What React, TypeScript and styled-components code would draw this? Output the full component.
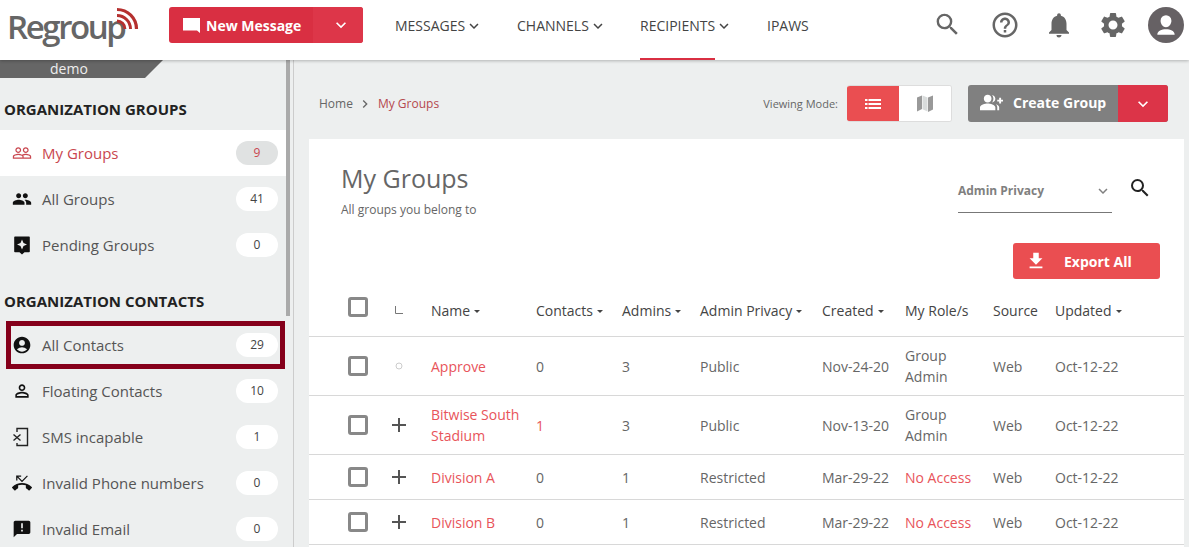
import styled, { createGlobalStyle } from "styled-components";
import {
	MdAccountCircle,
	MdAnnouncement,
	MdFileDownload,
	MdGroupAdd,
	MdHelpOutline,
	MdKeyboardArrowDown,
	MdNotifications,
	MdPeople,
	MdPeopleOutline,
	MdPersonOutline,
	MdPhoneMissed,
	MdSearch,
	MdSettings,
	MdChevronRight,
} from "react-icons/md";
import type { ReactNode } from "react";

const GlobalStyle = createGlobalStyle`
	html, body {
		margin: 0;
		height: 547px;
		overflow: hidden;
		background: #edefef;
		font-family: "Open Sans", "Liberation Sans", sans-serif;
		font-size: 14px;
		color: #444;
	}
	* {
		box-sizing: border-box;
	}
`;

const Page = styled.div`
	display: flex;
	flex-direction: column;
	height: 547px;
	overflow: hidden;
`;

const TopBar = styled.header`
	position: relative;
	z-index: 2;
	flex: 0 0 60px;
	display: flex;
	align-items: center;
	padding: 0 5px 0 7px;
	background: #fff;
	box-shadow: 0 1px 3px rgba(0, 0, 0, 0.25);
`;

const Logo = styled.div`
	position: relative;
	flex: 0 0 162px;
	height: 60px;
	font-size: 33px;
	font-weight: 600;
	line-height: 53px;
	letter-spacing: -2.4px;
	color: #666;
	svg {
		position: absolute;
		left: 98px;
		top: 4px;
	}
`;

const SplitButton = styled.div`
	display: flex;
	width: 194px;
	height: 36px;
	margin-bottom: 10px;
	border-radius: 3px;
	overflow: hidden;
	background: #d92f42;
	color: #fff;
`;

const SplitMain = styled.div`
	flex: 1;
	display: flex;
	align-items: center;
	gap: 6px;
	padding-left: 14px;
	font-size: 14px;
	font-weight: 700;
`;

const SplitCaret = styled.div`
	flex: 0 0 50px;
	display: flex;
	align-items: center;
	justify-content: center;
	background: #dd3649;
	font-size: 20px;
	padding-left: 5px;
`;

const Nav = styled.nav`
	display: flex;
	height: 60px;
	margin-left: 32px;
`;

const NavItem = styled.div<{ $active?: boolean; $width: number }>`
	display: flex;
	align-items: center;
	flex: 0 0 ${(p) => p.$width}px;
	min-width: 0;
	height: 60px;
	padding-bottom: 9px;
	font-size: 14px;
	color: #444;
	svg {
		flex: none;
		font-size: 18px;
	}
	${(p) => p.$active && `box-shadow: inset 0 -2px 0 #d92f42; margin-right: 52px;`}
`;

const TopIcons = styled.div`
	margin-left: auto;
	display: flex;
	align-items: center;
	gap: 24px;
	padding-bottom: 11px;
	color: #666;
	svg + svg {
		flex: none;
	}
`;

const HelpIcon = styled(MdHelpOutline)`
	margin-left: 4px;
`;

const Avatar = styled.div`
	position: relative;
	width: 36px;
	height: 36px;
	margin-left: -4px;
	border-radius: 50%;
	background: #666164;
	overflow: hidden;
	color: #fff;
	svg {
		display: block;
		margin: 5px;
	}
`;

const Body = styled.div`
	flex: 1;
	display: flex;
	min-height: 0;
`;

const Sidebar = styled.aside`
	position: relative;
	flex: 0 0 294px;
	border-right: 1px solid #ccc;
	overflow: hidden;
`;

const Scrollbar = styled.div`
	position: absolute;
	top: 0;
	left: 286px;
	width: 4px;
	height: 256px;
	background: #aaa;
`;

const Tenant = styled.div`
	width: 163px;
	height: 18px;
	padding-left: 50px;
	background: #666;
	clip-path: polygon(0 0, 100% 0, 145px 100%, 0 100%);
	color: #eee;
	font-size: 14px;
	line-height: 18px;
`;

const SideSection = styled.section`
	padding-bottom: 2px;
`;

const SideHeading = styled.h3`
	height: 20px;
	margin: 21px 0 11px;
	padding-left: 4px;
	font-size: 15px;
	font-weight: 700;
	line-height: 20px;
	color: #222;
`;

const SideItem = styled.div<{ $active?: boolean }>`
	position: relative;
	display: flex;
	align-items: center;
	width: 286px;
	height: 46px;
	padding: 0 8px 0 12px;
	font-size: 15px;
	background: ${(p) => (p.$active ? "#fff" : "transparent")};
	color: ${(p) => (p.$active ? "#c9474f" : "#555")};
`;

const SideIcon = styled.span<{ $active?: boolean }>`
	flex: 0 0 30px;
	display: flex;
	align-items: center;
	color: ${(p) => (p.$active ? "#c9474f" : "#111")};
`;

const Badge = styled.span<{ $active?: boolean }>`
	margin-left: auto;
	width: 42px;
	height: 24px;
	border-radius: 12px;
	background: ${(p) => (p.$active ? "#e0e2e2" : "#fff")};
	color: ${(p) => (p.$active ? "#c9474f" : "#444")};
	font-size: 12px;
	line-height: 23px;
	text-align: center;
`;

const Highlight = styled.div`
	position: absolute;
	top: -1px;
	bottom: -1px;
	left: 6px;
	right: 1px;
	border: 5px solid #85001b;
	pointer-events: none;
`;

const Main = styled.main`
	flex: 1;
	display: flex;
	flex-direction: column;
	padding-right: 5px;
	min-width: 0;
`;

const MainBar = styled.div`
	flex: 0 0 79px;
	display: flex;
	align-items: center;
	padding: 8px 16px 0 25px;
	font-size: 12px;
`;

const Crumbs = styled.div`
	display: flex;
	align-items: center;
	gap: 3px;
	font-size: 12px;
	color: #666;
	svg {
		font-size: 16px;
		margin-left: 1px;
		margin-right: 1px;
	}
`;

const CrumbCurrent = styled.span`
	margin-left: 1px;
	color: #b5484e;
`;

const ViewMode = styled.div`
	margin-left: auto;
	display: flex;
	align-items: center;
	gap: 9px;
	font-size: 11px;
	color: #666;
`;

const Toggle = styled.div`
	display: flex;
	width: 105px;
	height: 37px;
	border: 1px solid #ddd;
	border-left: none;
	border-radius: 3px;
	overflow: hidden;
	background: #fff;
`;

const ToggleOption = styled.div<{ $on?: boolean }>`
	flex: 1;
	display: flex;
	align-items: center;
	justify-content: center;
	background: ${(p) => (p.$on ? "#ea4e51" : "#fff")};
	color: ${(p) => (p.$on ? "#fff" : "#999")};
`;

const CreateButton = styled.div`
	display: flex;
	width: 200px;
	height: 37px;
	margin-left: 16px;
	border-radius: 3px;
	overflow: hidden;
	background: #808080;
	color: #fff;
`;

const CreateMain = styled.div`
	flex: 1;
	display: flex;
	align-items: center;
	gap: 10px;
	padding: 0 0 2px 12px;
	font-size: 14px;
	font-weight: 700;
`;

const CreateCaret = styled.div`
	flex: 0 0 50px;
	display: flex;
	align-items: center;
	justify-content: center;
	background: #dc3448;
	font-size: 20px;
`;

const Card = styled.section`
	flex: 1;
	margin-left: 15px;
	background: #fff;
`;

const CardHead = styled.div`
	display: flex;
	justify-content: space-between;
	height: 104px;
	padding: 21px 32px 0 32px;
`;

const Title = styled.h1`
	margin: 0;
	font-size: 25px;
	font-weight: 400;
	line-height: 36px;
	color: #666;
`;

const Subtitle = styled.p`
	margin: 6px 0 0;
	font-size: 12px;
	line-height: 16px;
	color: #666;
`;

const Filter = styled.div`
	display: flex;
	align-items: flex-start;
	gap: 16px;
	margin-top: 12px;
	color: #222;
`;

const Select = styled.div`
	display: flex;
	align-items: flex-start;
	justify-content: space-between;
	width: 154px;
	height: 41px;
	padding-top: 10px;
	border-bottom: 1px solid #777;
	font-size: 12px;
	font-weight: 700;
	line-height: 18px;
	color: #808080;
`;

const SearchIcon = styled(MdSearch)`
	margin-top: 4px;
`;

const ExportRow = styled.div`
	display: flex;
	justify-content: flex-end;
	padding-right: 24px;
	margin-bottom: 7px;
`;

const ExportButton = styled.div`
	display: flex;
	align-items: center;
	width: 147px;
	height: 36px;
	padding-left: 12px;
	gap: 17px;
	border-radius: 3px;
	background: #ea4e51;
	color: #fff;
	font-size: 14px;
	font-weight: 700;
`;

const Row = styled.div<{ $head?: boolean }>`
	display: grid;
	grid-template-columns: 83px 105px 86px 78px 122px 83px 88px 62px 1fr;
	align-items: center;
	min-height: ${(p) => (p.$head ? 51 : 45)}px;
	padding: ${(p) => (p.$head ? "7px 0 9px 39px" : "8px 0 8px 39px")};
	border-bottom: 1px solid #d8d8d8;
	font-size: 14px;
	line-height: 21px;
	color: ${(p) => (p.$head ? "#444" : "#666")};
`;

const Cell = styled.div<{ $tone?: "link" }>`
	padding-right: 10px;
	color: ${(p) => (p.$tone === "link" ? "#e8545a" : "inherit")};
`;

const Lead = styled.div`
	display: flex;
	align-items: center;
	gap: 21px;
`;

const Check = styled.div<{ $raised?: boolean }>`
	flex: 0 0 20px;
	width: 20px;
	height: 20px;
	margin-top: ${(p) => (p.$raised ? -6 : 0)}px;
	border: 3px solid #888;
	border-radius: 3px;
	background: #fff;
`;

const Expander = styled.div`
	flex: 0 0 20px;
	display: flex;
	align-items: center;
	justify-content: center;
	color: #555;
`;

const Caret = styled.i`
	display: inline-block;
	margin-left: 4px;
	vertical-align: middle;
	border-left: 3px solid transparent;
	border-right: 3px solid transparent;
	border-top: 3px solid #444;
`;

function Plus() {
	return (
		<svg width="16" height="16" viewBox="0 0 16 16">
			<path d="M8 1v14M1 8h14" stroke="currentColor" strokeWidth="2" />
		</svg>
	);
}

function SmsOff() {
	return (
		<svg width="18" height="20" viewBox="0 0 18 20" fill="none" stroke="#222" strokeWidth="1.4">
			<path d="M5 5V1.500h10.500v17H5V16" />
			<path d="M1.500 7.500l7 6M8.500 7.500l-7 6" />
		</svg>
	);
}

function PendingBadge() {
	return (
		<svg width="20" height="20" viewBox="0 0 20 20">
			<path d="M3 1.500h14a.8.8 0 0 1 .8.8v14.200a.8.8 0 0 1-.8.8h-4.500L10 19.500 7.500 17.300H3a.8.8 0 0 1-.8-.8V2.300a.8.8 0 0 1 .8-.8z" fill="#111" />
			<path d="M10 4.500l1.500 3.500 3.500 1.500-3.500 1.500L10 14.500 8.500 11 5 9.500 8.500 8z" fill="#edefef" />
		</svg>
	);
}

function ListLines() {
	return (
		<svg width="16" height="10" viewBox="0 0 16 10" fill="currentColor">
			<path d="M0 0h2.500v2H0zM3.500 0H16v2H3.500zM0 4h2.500v2H0zM3.500 4H16v2H3.500zM0 8h2.500v2H0zM3.500 8H16v2H3.500z" />
		</svg>
	);
}

function FoldedMap() {
	return (
		<svg width="16" height="17" viewBox="0 0 16 17" fill="currentColor">
			<path d="M0 2.500L5 .500v13.500l-5 2.500zM11 2.500l5-2v14l-5 2.500z" />
			<path d="M5.500.500l5 2v14l-5-2.300z" fill="#d9dcdc" />
		</svg>
	);
}

const groups = [
	{ name: "My Groups", count: "9", icon: <MdPeopleOutline size={20} />, active: true },
	{ name: "All Groups", count: "41", icon: <MdPeople size={20} /> },
	{ name: "Pending Groups", count: "0", icon: <PendingBadge /> },
];

const contacts: { name: string; count: string; icon: ReactNode; marked?: boolean }[] = [
	{ name: "All Contacts", count: "29", icon: <MdAccountCircle size={20} />, marked: true },
	{ name: "Floating Contacts", count: "10", icon: <MdPersonOutline size={20} /> },
	{ name: "SMS incapable", count: "1", icon: <SmsOff /> },
	{ name: "Invalid Phone numbers", count: "0", icon: <MdPhoneMissed size={20} /> },
	{ name: "Invalid Email", count: "0", icon: <MdAnnouncement size={20} /> },
];

const heads: [string, boolean][] = [
	["Name", true],
	["Contacts", true],
	["Admins", true],
	["Admin Privacy", true],
	["Created", true],
	["My Role/s", false],
	["Source", false],
	["Updated", true],
];

const rows = [
	{ name: "Approve", contacts: "0", admins: "3", privacy: "Public", created: "Nov-24-20", role: "Group Admin", leaf: true },
	{ name: "Bitwise South Stadium", contacts: "1", admins: "3", privacy: "Public", created: "Nov-13-20", role: "Group Admin", contactsLink: true },
	{ name: "Division A", contacts: "0", admins: "1", privacy: "Restricted", created: "Mar-29-22", role: "No Access" },
	{ name: "Division B", contacts: "0", admins: "1", privacy: "Restricted", created: "Mar-29-22", role: "No Access" },
];

export default function App() {
	return (
		<Page>
			<GlobalStyle />
			<TopBar>
				<Logo>
					Regroup
					<svg width="36" height="36" viewBox="0 0 36 36" fill="none" stroke="#b5302f">
						<path d="M12 5.500A19.500 19.500 0 0 1 31.500 25" strokeWidth="3.200" />
						<path d="M12 11.500A13.500 13.500 0 0 1 25.500 25" strokeWidth="3" />
						<path d="M12 17A8 8 0 0 1 20 25" strokeWidth="2.800" />
					</svg>
				</Logo>
				<SplitButton>
					<SplitMain>
						<svg width="17" height="15" viewBox="0 0 17 15">
							<path d="M0 0h17v15l-3-2.500H0z" fill="#fff" />
						</svg>
						New Message
					</SplitMain>
					<SplitCaret>
						<MdKeyboardArrowDown />
					</SplitCaret>
				</SplitButton>
				<Nav>
					<NavItem $width={122}>MESSAGES<MdKeyboardArrowDown /></NavItem>
					<NavItem $width={123}>CHANNELS<MdKeyboardArrowDown /></NavItem>
					<NavItem $active $width={75}>RECIPIENTS<MdKeyboardArrowDown /></NavItem>
					<NavItem $width={60}>IPAWS</NavItem>
				</Nav>
				<TopIcons>
					<MdSearch size={29} />
					<HelpIcon size={30} />
					<MdNotifications size={30} />
					<MdSettings size={30} />
					<Avatar>
						<svg width="26" height="26" viewBox="0 0 24 24" fill="currentColor">
							<path d="M12 3a5 5 0 0 1 5 5c0 2.800-2.200 6-5 6s-5-3.200-5-6a5 5 0 0 1 5-5zM4 21c0-3.500 4-5 8-5s8 1.500 8 5z" />
						</svg>
					</Avatar>
				</TopIcons>
			</TopBar>
			<Body>
				<Sidebar>
					<Scrollbar />
					<Tenant>demo</Tenant>
					<SideSection>
						<SideHeading>ORGANIZATION GROUPS</SideHeading>
						{groups.map((g) => (
							<SideItem key={g.name} $active={g.active}>
								<SideIcon $active={g.active}>{g.icon}</SideIcon>
								{g.name}
								<Badge $active={g.active}>{g.count}</Badge>
							</SideItem>
						))}
					</SideSection>
					<SideSection>
						<SideHeading>ORGANIZATION CONTACTS</SideHeading>
						{contacts.map((c) => (
							<SideItem key={c.name}>
								<SideIcon>{c.icon}</SideIcon>
								{c.name}
								<Badge>{c.count}</Badge>
								{c.marked && <Highlight />}
							</SideItem>
						))}
					</SideSection>
				</Sidebar>
				<Main>
					<MainBar>
						<Crumbs>
							Home
							<MdChevronRight />
							<CrumbCurrent>My Groups</CrumbCurrent>
						</Crumbs>
						<ViewMode>
							Viewing Mode:
							<Toggle>
								<ToggleOption $on><ListLines /></ToggleOption>
								<ToggleOption><FoldedMap /></ToggleOption>
							</Toggle>
						</ViewMode>
						<CreateButton>
							<CreateMain>
								<MdGroupAdd size={23} />
								Create Group
							</CreateMain>
							<CreateCaret>
								<MdKeyboardArrowDown />
							</CreateCaret>
						</CreateButton>
					</MainBar>
					<Card>
						<CardHead>
							<div>
								<Title>My Groups</Title>
								<Subtitle>All groups you belong to</Subtitle>
							</div>
							<Filter>
								<Select>
									Admin Privacy
									<MdKeyboardArrowDown size={18} />
								</Select>
								<SearchIcon size={24} />
							</Filter>
						</CardHead>
						<ExportRow>
							<ExportButton>
								<MdFileDownload size={22} />
								<span>Export All</span>
							</ExportButton>
						</ExportRow>
						<Row $head>
							<Lead>
								<Check $raised />
								<Expander>
									<svg width="10" height="10" viewBox="0 0 10 10" fill="none" stroke="#777">
										<path d="M1.500 1v7.500H9" />
									</svg>
								</Expander>
							</Lead>
							{heads.map(([label, sortable]) => (
								<Cell key={label}>
									{label}
									{sortable && <Caret />}
								</Cell>
							))}
						</Row>
						{rows.map((r) => (
							<Row key={r.name}>
								<Lead>
									<Check />
									<Expander>
										{r.leaf ? (
											<svg width="8" height="8" viewBox="0 0 8 8" fill="none" stroke="#ccc">
												<circle cx="4" cy="4" r="3" />
											</svg>
										) : (
											<Plus />
										)}
									</Expander>
								</Lead>
								<Cell $tone="link">{r.name}</Cell>
								<Cell $tone={r.contactsLink ? "link" : undefined}>{r.contacts}</Cell>
								<Cell>{r.admins}</Cell>
								<Cell>{r.privacy}</Cell>
								<Cell>{r.created}</Cell>
								<Cell $tone={r.role === "No Access" ? "link" : undefined}>{r.role}</Cell>
								<Cell>Web</Cell>
								<Cell>Oct-12-22</Cell>
							</Row>
						))}
					</Card>
				</Main>
			</Body>
		</Page>
	);
}
